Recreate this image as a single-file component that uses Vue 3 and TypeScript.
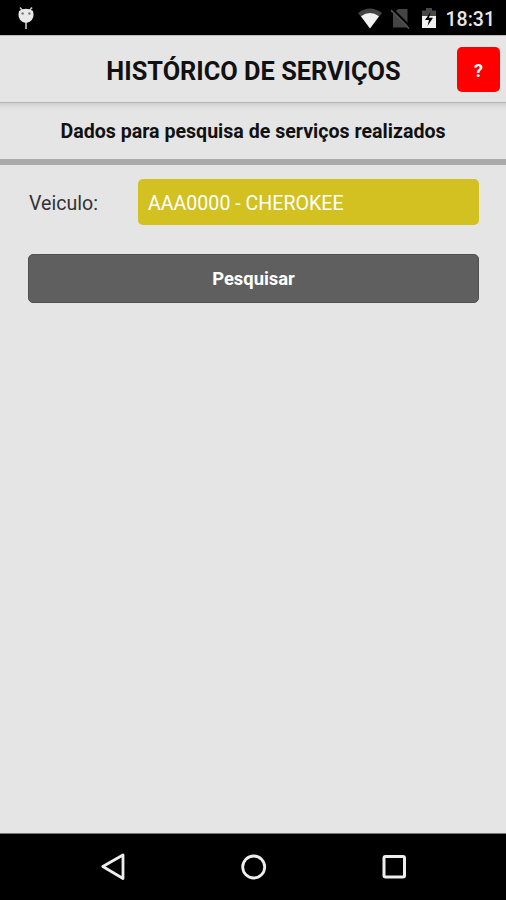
<script setup lang="ts">
import { ref } from 'vue'

const time = ref('18:31')
const vehicle = ref('AAA0000 - CHEROKEE')
</script>

<template>
  <div class="screen">
    <div class="status">
      <svg class="robot" width="18" height="24" viewBox="0 0 18 24">
        <path d="M3 1.500l2.500 3M15 1.500l-2.500 3M9 16v7" stroke="#c8c8c8" stroke-width="1.600" fill="none" />
        <path d="M2 5Q9 .5 16 5Q18 12 13 15.500Q9 18 5 15.500Q0 12 2 5z" fill="#e9e9e9" />
        <circle cx="5.600" cy="7.500" r="1.200" fill="#777" />
        <circle cx="12.400" cy="7.500" r="1.200" fill="#777" />
      </svg>
      <div class="indicators">
        <svg class="wifi" width="24" height="21" viewBox="0 0 24 21">
          <path d="M0 5Q12-4 24 5L12 20.500z" fill="#444" />
          <path d="M3 8.300Q12 1.800 21 8.300L12 20.500z" fill="#f2f2f2" />
        </svg>
        <svg class="sim" width="20" height="21" viewBox="0 0 20 21">
          <path d="M7 1h9.500v18.500H2V6z" fill="#444" />
          <path d="M1.500 1l18 18" stroke="#000" stroke-width="2" />
          <path d="M0 2l18 18.500" stroke="#505050" stroke-width="1.700" />
        </svg>
        <svg class="battery" width="14" height="20" viewBox="0 0 14 20">
          <path d="M0 2.500h4V0h6v2.500h4V8H0z" fill="#484848" />
          <path d="M0 8h14v12H0z" fill="#f2f2f2" />
          <path d="M8.500 4L3 12h4l-1.500 6L11 9.800H7z" fill="#000" />
        </svg>
        <span class="time">{{ time }}</span>
      </div>
    </div>
    <header class="header">
      <h1 class="title">HISTÓRICO DE SERVIÇOS</h1>
      <button class="help" type="button">?</button>
    </header>
    <h2 class="subtitle"><span>Dados para pesquisa de serviços realizados</span></h2>
    <main class="content">
      <div class="row">
        <span class="label">Veiculo:</span>
        <button class="select" type="button"><span>{{ vehicle }}</span></button>
      </div>
      <button class="search" type="button"><span>Pesquisar</span></button>
    </main>
    <nav class="navbar">
      <svg width="28" height="32" viewBox="0 0 28 32">
        <path d="M2.800 15.500L23 4v23.500z" fill="none" stroke="#eee" stroke-width="2.800" stroke-linejoin="round" />
      </svg>
      <svg width="28" height="32" viewBox="0 0 28 32">
        <circle cx="13.700" cy="16" r="11" fill="none" stroke="#eee" stroke-width="2.800" />
      </svg>
      <svg width="28" height="32" viewBox="0 0 28 32">
        <rect x="4" y="5.500" width="20.500" height="20.500" rx="1.500" fill="none" stroke="#eee" stroke-width="3" />
      </svg>
    </nav>
  </div>
</template>

<style>
body {
  margin: 0;
}
</style>

<style scoped>
.screen {
  width: 506px;
  height: 900px;
  display: flex;
  flex-direction: column;
  background: #e5e5e5;
  font-family: Roboto, "Liberation Sans", sans-serif;
  color: #111;
  overflow: hidden;
}
.status {
  height: 35px;
  box-sizing: border-box;
  padding: 0 11px 0 17px;
  background: #000;
  display: flex;
  justify-content: space-between;
  align-items: flex-start;
  flex: none;
}
.robot {
  margin-top: 6px;
}
.indicators {
  display: flex;
  align-items: flex-start;
}
.wifi {
  margin-top: 8px;
}
.sim {
  margin: 8px 0 0 9px;
}
.battery {
  margin: 8px 0 0 11px;
}
.time {
  margin: 8px 0 0 10px;
  font-size: 19.5px;
  line-height: 24px;
  font-weight: 500;
  color: #e8e8e8;
}
.header {
  height: 68px;
  box-sizing: border-box;
  border-top: 1px solid #bbb;
  border-bottom: 1px solid #b6b6b6;
  display: grid;
  grid-template-columns: 1fr 43px;
  align-items: center;
  padding: 1px 6px 0 50px;
  flex: none;
}
.title {
  margin: 0;
  padding-top: 2px;
  text-align: center;
  font-size: 25.35px;
  line-height: 30px;
  font-weight: 700;
  white-space: nowrap;
}
.help {
  width: 43px;
  height: 45px;
  padding: 1px 0 0;
  border: 0;
  border-radius: 5px;
  background: #f00;
  color: #fff;
  font: 700 18px Roboto, sans-serif;
}
.subtitle {
  margin: 0;
  height: 62px;
  box-sizing: border-box;
  border-bottom: 6px solid #aaa;
  background: linear-gradient(#d0d0d0, #e2e2e2 5px, #e5e5e5 10px);
  text-align: center;
  font-size: 19.6px;
  line-height: 57px;
  font-weight: 700;
  flex: none;
}
.content {
  flex: 1;
  padding: 14px 27px 0 28px;
}
.row {
  display: flex;
  align-items: center;
}
.label {
  width: 110px;
  padding: 2px 0 0 1px;
  box-sizing: border-box;
  font-size: 19.6px;
  color: #333;
}
.select {
  flex: 1;
  height: 46px;
  padding: 3px 10px 0;
  border: 0;
  border-radius: 5px;
  background: #d3c021;
  color: #fff;
  font: 400 19.6px Roboto, sans-serif;
  text-align: left;
}
.search {
  display: block;
  width: 100%;
  height: 49px;
  margin-top: 29px;
  padding-top: 1px;
  border: 1px solid #505050;
  border-radius: 5px;
  background: #5f5f5f;
  color: #fff;
  font: 700 18.4px Roboto, sans-serif;
}
.navbar {
  height: 67px;
  box-sizing: border-box;
  border-top: 1px solid #777;
  padding-left: 100px;
  background: #000;
  display: flex;
  align-items: center;
  gap: 112px;
  flex: none;
}
</style>
